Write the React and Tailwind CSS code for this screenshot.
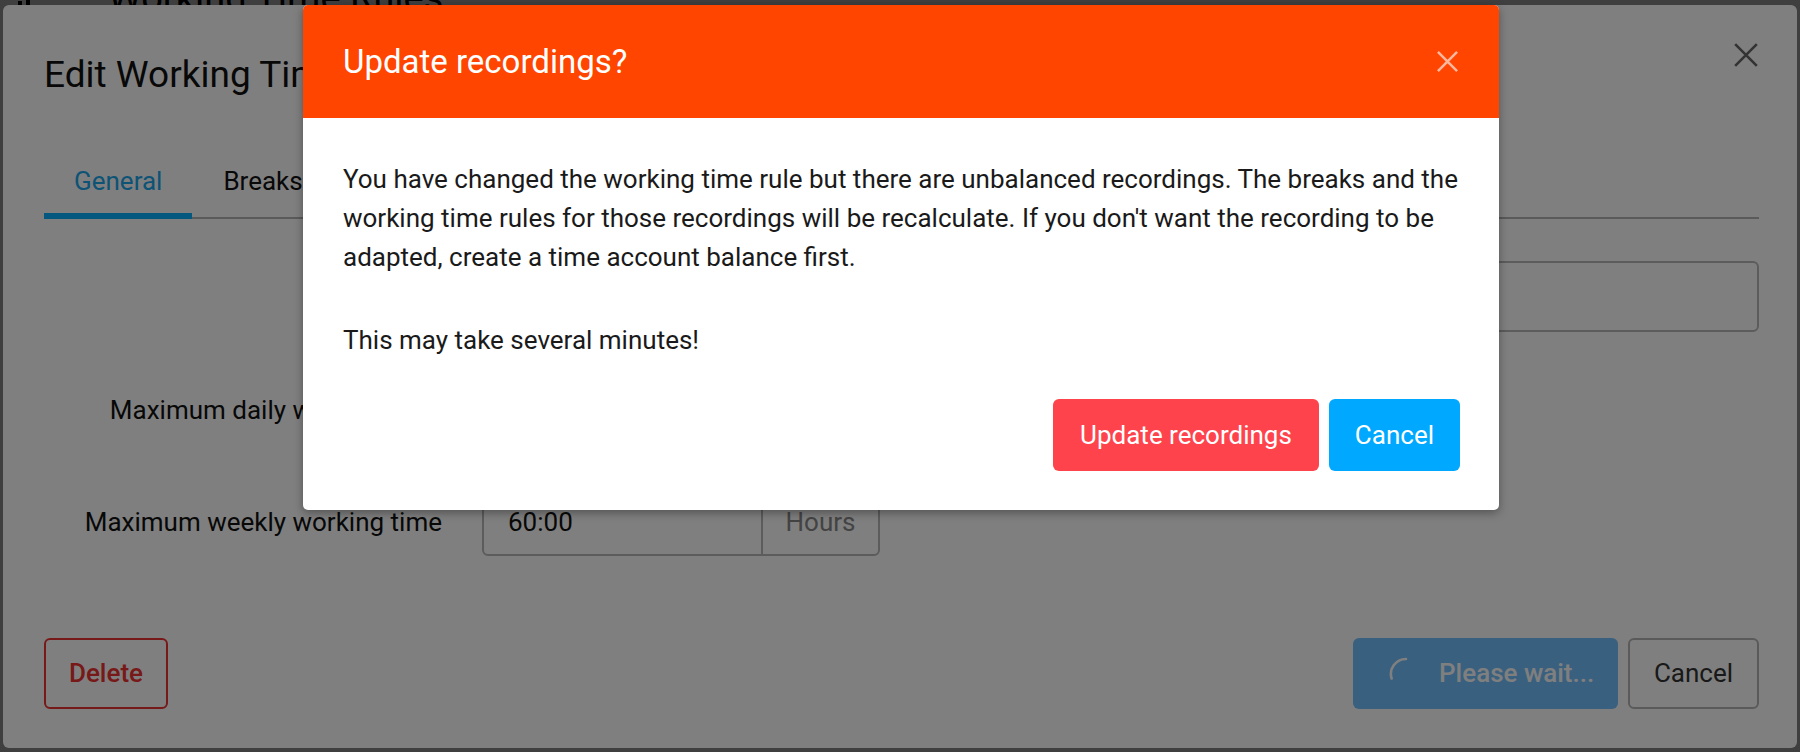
import React from "react";

function XIcon({ size, color, width = 2.5, opacity = 1 }) {
  return (
    <svg width={size} height={size} viewBox="0 0 24 24" style={{ opacity }}>
      <path d="M2 2 L22 22 M22 2 L2 22" stroke={color} strokeWidth={width} fill="none" />
    </svg>
  );
}

function Spinner() {
  return (
    <svg width="34" height="34" viewBox="0 0 34 34">
      <path d="M2.6 21.5 A15 15 0 0 1 17 2" stroke="#ffffff" strokeWidth="2.6" fill="none" strokeLinecap="round" />
    </svg>
  );
}

export default function App() {
  return (
    <div className="relative w-[1800px] h-[752px] overflow-hidden bg-white font-[Roboto,sans-serif]">
      {/* Page behind */}
      <div className="flex items-center gap-[70px] pl-[18px] -mt-[22px] h-[40px]">
        <div className="flex items-end gap-[4px] h-[34px]">
          <div className="w-[4px] h-[14px] bg-black" />
          <div className="w-[4px] h-[22px] bg-black" />
          <div className="w-[4px] h-[10px] bg-black" />
        </div>
        <div className="text-[38px] leading-none text-black">Working Time Rules</div>
      </div>

      <div className="absolute inset-0 bg-black/50" />

      {/* Edit dialog */}
      <div className="absolute left-[3px] top-[5px] w-[1794px] h-[743px] bg-white rounded-[6px] flex flex-col pl-[41px] pr-[38px]">
        <div className="flex justify-between items-start">
          <div className="mt-[49px] text-[37px] leading-[42px] text-[#111]">Edit Working Time Rule</div>
          <div className="mt-[37px]">
            <XIcon size={26} color="#666" width={2.4} />
          </div>
        </div>

        <div className="mt-[70px] flex border-b-2 border-[#b4b4b4]">
          <div className="px-[30px] pb-[17px] -mb-[2px] border-b-[6px] border-[#08b0ff] text-[26px] leading-[30px] text-[#1aa6ec]">
            General
          </div>
          <div className="px-[31px] pb-[17px] -mb-[2px] border-b-[6px] border-transparent text-[26px] leading-[30px] text-[#111]">
            Breaks
          </div>
          <div className="px-[31px] pb-[17px] -mb-[2px] border-b-[6px] border-transparent text-[26px] leading-[30px] text-[#111]">
            Overtime
          </div>
        </div>

        <div className="mt-[42px] flex items-center h-[71px]">
          <div className="w-[438px] pr-[40px] text-right text-[26px] text-[#111]">Name</div>
          <div className="flex-1 h-full border-2 border-[#b8b8b8] rounded-[6px] px-[24px] flex items-center text-[26px] text-[#111]">
            Standard
          </div>
        </div>

        <div className="mt-[44px] flex items-center h-[68px]">
          <div className="w-[438px] pr-[40px] text-right text-[26px] text-[#111] whitespace-nowrap">Maximum daily working time</div>
          <div className="w-[398px] h-full border-2 border-[#b8b8b8] rounded-[6px] flex">
            <div className="w-[277px] pl-[24px] flex items-center text-[26px] text-[#111]">10:00</div>
            <div className="flex-1 border-l-2 border-[#b8b8b8] flex items-center justify-center text-[26px] text-[#888]">Hours</div>
          </div>
        </div>

        <div className="mt-[44px] flex items-center h-[68px]">
          <div className="w-[438px] pr-[40px] text-right text-[26px] text-[#111] whitespace-nowrap">Maximum weekly working time</div>
          <div className="w-[398px] h-full border-2 border-[#b8b8b8] rounded-[6px] flex">
            <div className="w-[277px] pl-[24px] flex items-center text-[26px] text-[#111]">60:00</div>
            <div className="flex-1 border-l-2 border-[#b8b8b8] flex items-center justify-center text-[26px] text-[#888]">Hours</div>
          </div>
        </div>

        <div className="mt-[82px] flex justify-between items-center">
          <div className="w-[124px] h-[71px] border-2 border-[#f03232] rounded-[6px] flex items-center justify-center text-[26px] font-medium text-[#f03232]">
            Delete
          </div>
          <div className="flex gap-[10px]">
            <div className="w-[265px] h-[71px] rounded-[6px] bg-[#74c0ff] flex items-center pl-[36px]">
              <Spinner />
              <span className="ml-[16px] text-[26px] font-medium text-white">Please wait...</span>
            </div>
            <div className="w-[131px] h-[71px] border-2 border-[#b4b4b4] rounded-[6px] flex items-center justify-center text-[26px] text-[#333]">
              Cancel
            </div>
          </div>
        </div>
      </div>

      <div className="absolute inset-0 bg-black/50" />

      {/* Confirmation modal */}
      <div className="absolute left-[303px] top-[5px] w-[1196px] bg-white rounded-[5px] overflow-hidden shadow-[0_3px_10px_rgba(0,0,0,0.35)]">
        <div className="h-[113px] bg-[#ff4500] flex items-center justify-between pl-[40px] pr-[40px]">
          <div className="text-[33px] text-white">Update recordings?</div>
          <XIcon size={23} color="#ffffff" width={2.6} opacity={0.62} />
        </div>
        <div className="pl-[40px] pr-[20px] pt-[42px] pb-[39px]">
          <p className="text-[26px] leading-[39px] text-[#1a1a1a]">
            You have changed the working time rule but there are unbalanced recordings. The breaks and the working time rules for those recordings will be recalculate. If you don't want the recording to be adapted, create a time account balance first.
          </p>
          <p className="mt-[44px] text-[26px] leading-[39px] text-[#1a1a1a]">This may take several minutes!</p>
          <div className="mt-[39px] pr-[19px] flex justify-end gap-[10px]">
            <div className="h-[72px] px-[27px] rounded-[6px] bg-[#ff434c] flex items-center text-[26px] text-white">
              Update recordings
            </div>
            <div className="h-[72px] px-[26px] rounded-[6px] bg-[#00a8ff] flex items-center text-[26px] text-white">
              Cancel
            </div>
          </div>
        </div>
      </div>
    </div>
  );
}
